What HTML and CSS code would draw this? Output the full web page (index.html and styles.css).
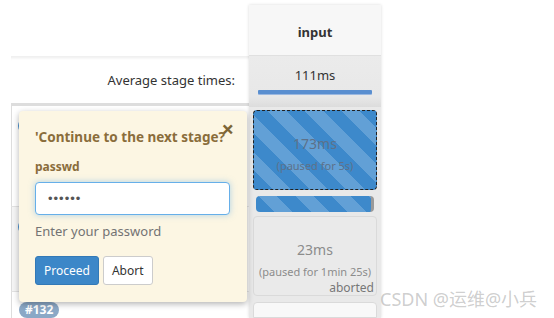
FILE: index.html
```html
<!DOCTYPE html>
<html lang="en">
<head>
    <meta charset="UTF-8">
    <title>Stage View</title>
    <link rel="stylesheet" href="styles.css">
</head>
<body>

    <div class="stage-view">
        <!-- Left side: labels and build rows -->
        <div class="labels">
            <div class="label-head"></div>
            <div class="label-avg">Average stage times:</div>
            <div class="build-row first">
                <span class="badge peek"></span>
            </div>
            <div class="build-row second">
                <span class="badge peek"></span>
            </div>
            <div class="build-row third">
                <span class="badge">#132</span>
            </div>
        </div>

        <!-- Stage column -->
        <div class="stage-col">
            <div class="stage-head">input</div>
            <div class="stage-avg">
                <span>111ms</span>
                <div class="avg-bar"></div>
            </div>
            <div class="stage-slot first">
                <div class="cell paused">
                    <span class="time">173ms</span>
                    <span class="note">(paused for 5s)</span>
                </div>
                <div class="progress"></div>
            </div>
            <div class="stage-slot second">
                <div class="cell aborted">
                    <span class="time">23ms</span>
                    <span class="note">(paused for 1min 25s)</span>
                    <span class="status">aborted</span>
                </div>
            </div>
            <div class="stage-slot third">
                <div class="cell empty"></div>
            </div>
        </div>
    </div>

    <!-- Input request popover -->
    <div class="popover">
        <span class="close">&times;</span>
        <h3 class="pop-title">'Continue to the next stage?</h3>
        <label class="pop-label" for="passwd">passwd</label>
        <input id="passwd" class="pop-input" type="password" value="123456">
        <p class="pop-help">Enter your password</p>
        <div class="pop-buttons">
            <button class="btn proceed">Proceed</button>
            <button class="btn abort">Abort</button>
        </div>
    </div>

    <div class="watermark">CSDN @运维@小兵</div>

</body>
</html>
```

FILE: styles.css
```css
* {
    margin: 0;
    padding: 0;
    box-sizing: border-box;
}

html {
    overflow: hidden;
}

body {
    font-family: 'Noto Sans', 'Open Sans', sans-serif;
    font-size: 12px;
    color: #333;
    background-color: #fff;
    width: 554px;
    height: 318px;
    overflow: hidden;
    position: relative;
}

/* Stage view layout */
.stage-view {
    display: flex;
    height: 318px;
    padding: 5px 0 0 11px;
}

.labels {
    width: 238px;
    display: flex;
    flex-direction: column;
}

.label-head {
    height: 52px;
}

.label-avg {
    height: 51px;
    display: flex;
    align-items: center;
    justify-content: flex-end;
    padding: 0 14px 0 0;
    font-size: 13px;
    color: #333;
    border-top: 1px solid #f0f0f0;
    box-shadow: inset 0 3px 3px -2px rgba(0, 0, 0, 0.08);
    border-bottom: 3px solid #ddd;
}

.build-row {
    border-left: 1px solid #ddd;
    position: relative;
}

.build-row.first {
    height: 103px;
    border-bottom: 1px solid #e2e2e2;
}

.build-row.second {
    height: 86px;
    background-color: #f5f5f5;
    border-bottom: 1px solid #e2e2e2;
}

.build-row.third {
    flex: 1;
    padding: 9px 0 0 7px;
}

.badge {
    display: inline-block;
    background-color: #8ba8c6;
    color: #fff;
    font-size: 12px;
    font-weight: bold;
    line-height: 14px;
    padding: 1px 6px;
    border-radius: 8px;
}

.badge.peek {
    position: absolute;
    left: 6px;
    top: 12px;
    width: 40px;
    height: 16px;
    background-color: #4a90d0;
}

/* Stage column */
.stage-col {
    width: 132px;
    background-color: #e9e9e9;
    box-shadow: 0 0 3px rgba(0, 0, 0, 0.15);
    display: flex;
    flex-direction: column;
}

.stage-head {
    height: 51px;
    background-color: #f7f7f7;
    display: flex;
    align-items: center;
    justify-content: center;
    padding-top: 3px;
    font-weight: bold;
    font-size: 13px;
    color: #333;
    border-bottom: 1px solid #e0e0e0;
}

.stage-avg {
    height: 51px;
    background: linear-gradient(#ebebeb, #e8e8e8 80%, #dcdcdc);
    display: flex;
    flex-direction: column;
    align-items: center;
    padding-top: 10px;
    font-size: 13px;
    color: #333;
}

.avg-bar {
    width: 114px;
    height: 4px;
    margin-top: 6px;
    background-color: #5a8fd0;
    border-radius: 1px;
    box-shadow: 0 1px 0 #9bb8e0;
}

.stage-slot {
    padding: 3px 4px 0;
}

.stage-slot.first {
    height: 106px;
}

.stage-slot.second {
    height: 86px;
}

.stage-slot.third {
    flex: 1;
}

.cell {
    height: 80px;
    border-radius: 4px;
    display: flex;
    flex-direction: column;
    align-items: center;
    justify-content: center;
    color: #888;
    position: relative;
}

.cell .time {
    font-size: 14px;
    margin-top: 6px;
}

.cell .note {
    font-size: 11px;
    margin-top: 5px;
}

.cell.paused {
    border: 1px dashed #222;
    background: repeating-linear-gradient(45deg, #3d89cb 0 13px, #62a0d6 13px 26px);
    color: #5d7189;
}

.progress {
    height: 16px;
    margin: 6px 3px 0;
    border-radius: 4px;
    background: repeating-linear-gradient(45deg, #3d89cb 0 13px, #62a0d6 13px 26px);
    border-right: 3px solid #9a9a9a;
}

.cell.aborted {
    background-color: #eaeaea;
    border: 1px solid #dadada;
    color: #8c8c8c;
}

.status {
    position: absolute;
    right: 2px;
    bottom: -1px;
    font-size: 12px;
    color: #777;
}

.cell.empty {
    height: 100%;
    border-radius: 4px 4px 0 0;
    background-color: #f8f8f8;
    border: 1px solid #dadada;
}

/* Popover */
.popover {
    position: absolute;
    left: 19px;
    top: 111px;
    width: 228px;
    height: 191px;
    background-color: #fcf6e3;
    border-radius: 4px;
    box-shadow: 0 2px 6px rgba(0, 0, 0, 0.3);
    padding: 16px 16px 0;
    color: #8a6d3b;
}

.close {
    position: absolute;
    right: 13px;
    top: 6px;
    font-size: 22px;
    font-weight: bold;
    line-height: 22px;
    color: #7d6537;
}

.pop-title {
    font-size: 13.5px;
    font-weight: bold;
    line-height: 20px;
    white-space: nowrap;
    margin-bottom: 12px;
}

.pop-label {
    display: block;
    font-size: 12px;
    font-weight: bold;
    line-height: 16px;
    margin-bottom: 7px;
}

.pop-input {
    display: block;
    width: 195px;
    height: 33px;
    border: 1px solid #66afe9;
    border-radius: 4px;
    box-shadow: 0 0 6px rgba(102, 175, 233, 0.5);
    padding: 0 12px;
    font-size: 13px;
    color: #555;
    letter-spacing: 1px;
    background-color: #fff;
    outline: none;
}

.pop-help {
    font-size: 13px;
    color: #737373;
    margin-top: 7px;
    line-height: 18px;
}

.pop-buttons {
    display: flex;
    gap: 4px;
    margin-top: 16px;
}

.btn {
    font-family: inherit;
    font-size: 12px;
    height: 29px;
    padding: 0 8px;
    border-radius: 3px;
    cursor: pointer;
}

.proceed {
    background-color: #3c87c8;
    border: 1px solid #3279b7;
    color: #fff;
}

.abort {
    background-color: #fff;
    border: 1px solid #ccc;
    color: #333;
}

/* Watermark */
.watermark {
    position: absolute;
    left: 380px;
    top: 285px;
    font-family: 'Noto Sans', 'Noto Sans CJK SC', sans-serif;
    font-size: 18px;
    color: rgba(130, 130, 130, 0.4);
    white-space: nowrap;
}
```
